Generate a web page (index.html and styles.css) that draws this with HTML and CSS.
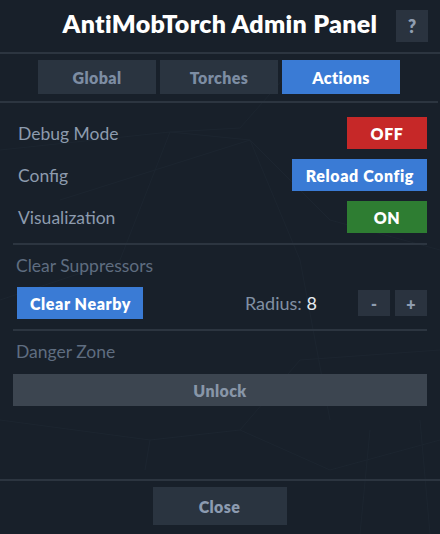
FILE: index.html
```html
<!DOCTYPE html>
<html lang="en">

<head>
	<meta charset="UTF-8">
	<title>AntiMobTorch Admin Panel</title>
	<link rel="stylesheet" href="styles.css">
</head>

<body>
	<div class="panel">
		<!-- faint web of lines behind the panel -->
		<svg class="backdrop" width="440" height="534" viewBox="0 0 440 534">
			<g stroke="#202a35" stroke-width="1" fill="none">
				<path d="M0 150 L170 132 L250 140 L330 220 L440 250"/>
				<path d="M170 132 L120 260 L0 300"/>
				<path d="M170 132 L240 128 L300 60"/>
				<path d="M250 140 L300 260 L330 420"/>
				<path d="M60 200 L250 140"/>
				<path d="M0 420 L150 440 L240 430 L330 470 L440 440"/>
				<path d="M150 440 L145 470"/>
				<path d="M370 430 L360 534"/>
				<path d="M420 420 L430 534"/>
				<path d="M240 430 L300 360 L440 350"/>
			</g>
		</svg>
		<header class="topbar">
			<h1>AntiMobTorch Admin Panel</h1>
			<button class="help">?</button>
		</header>
		<nav class="tabs">
			<button class="tab">Global</button>
			<button class="tab">Torches</button>
			<button class="tab active">Actions</button>
		</nav>
		<main class="content">
			<section class="group">
				<div class="row">
					<span class="label">Debug Mode</span>
					<button class="btn red">OFF</button>
				</div>
				<div class="row">
					<span class="label">Config</span>
					<button class="btn blue wide">Reload Config</button>
				</div>
				<div class="row">
					<span class="label">Visualization</span>
					<button class="btn green">ON</button>
				</div>
			</section>
			<section class="group">
				<h2>Clear Suppressors</h2>
				<div class="row clear-row">
					<button class="btn blue wide narrow">Clear Nearby</button>
					<span class="radius">Radius: <b>8</b></span>
					<div class="steps">
						<button class="step">-</button>
						<button class="step">+</button>
					</div>
				</div>
			</section>
			<section class="group last">
				<h2>Danger Zone</h2>
				<button class="unlock">Unlock</button>
			</section>
		</main>
		<footer class="bottom">
			<button class="close">Close</button>
		</footer>
	</div>
</body>

</html>
```

FILE: styles.css
```css
body {
	margin: 0;
	padding: 0;
	background-color: #18202a;
	font-family: Lato, "Noto Sans", sans-serif;
}

button {
	font-family: inherit;
	border: none;
	cursor: pointer;
	position: relative;
}

.panel {
	width: 440px;
	height: 534px;
	display: flex;
	flex-direction: column;
	position: relative;
}

.backdrop {
	position: absolute;
	left: 0;
	top: 0;
	opacity: 0.55;
}

.topbar {
	height: 52px;
	display: flex;
	align-items: center;
	justify-content: center;
	position: relative;
	border-bottom: 2px solid #2c3540;
}

.topbar h1 {
	margin: 0 0 6px;
	color: #ffffff;
	font-size: 25px;
	font-weight: 800;
	letter-spacing: 0.3px;
}

.help {
	position: absolute;
	right: 12px;
	top: 10px;
	width: 32px;
	height: 32px;
	background-color: #2a333f;
	color: #8f9db0;
	font-size: 18px;
	font-weight: 800;
}

.tabs {
	display: flex;
	justify-content: center;
	gap: 4px;
	padding: 6px 0 7px;
	margin-right: 2px;
	border-bottom: 2px solid #2c3540;
	position: relative;
}

.tab {
	width: 118px;
	height: 34px;
	background-color: #2a3440;
	color: #7d8da3;
	font-size: 16px;
	font-weight: 800;
	letter-spacing: 0.4px;
}

.tab.active {
	background-color: #3a7bd5;
	color: #ffffff;
}

.content {
	flex: 1;
	padding: 0 13px;
	position: relative;
}

.group {
	border-bottom: 2px solid #2c3540;
}

.group.last {
	border-bottom: none;
}

.group:first-child {
	padding: 14px 0 10px;
	display: flex;
	flex-direction: column;
	gap: 10px;
}

.row {
	display: flex;
	align-items: center;
	justify-content: space-between;
}

.label {
	color: #8d9bae;
	font-size: 17.5px;
	padding-left: 5px;
}

.btn {
	height: 32px;
	color: #ffffff;
	font-size: 16px;
	font-weight: 800;
	letter-spacing: 0.6px;
	width: 80px;
}

.btn.wide {
	width: auto;
	padding: 0 13px 0 14px;
}

.btn.narrow {
	padding: 0 12px 0 13px;
}

.red {
	background-color: #c62828;
}

.blue {
	background-color: #3a7bd5;
}

.green {
	background-color: #2e7d32;
}

h2 {
	margin: 0;
	color: #5f6d80;
	font-size: 17.5px;
	font-weight: 400;
	padding: 10px 0 0 3px;
}

.clear-row {
	padding: 11px 0 10px 4px;
}

.radius {
	color: #8190a3;
	font-size: 18px;
	margin-left: 102px;
}

.radius b {
	color: #e6ebf0;
	font-weight: 400;
}

.steps {
	display: flex;
	gap: 5px;
	margin-left: auto;
}

.step {
	width: 32px;
	height: 26px;
	background-color: #2a333f;
	color: #8f9db0;
	font-size: 16px;
	font-weight: 800;
}

.unlock {
	display: block;
	width: 100%;
	height: 32px;
	margin-top: 12px;
	background-color: #3c4550;
	color: #8896a8;
	font-size: 16px;
	font-weight: 800;
	letter-spacing: 0.4px;
}

.bottom {
	border-top: 2px solid #2c3540;
	height: 53px;
	display: flex;
	justify-content: center;
	align-items: flex-start;
	position: relative;
}

.close {
	margin-top: 6px;
	margin-right: 1px;
	width: 134px;
	height: 38px;
	background-color: #2a3440;
	color: #8c9bb0;
	font-size: 16px;
	font-weight: 800;
	letter-spacing: 0.4px;
}
```
